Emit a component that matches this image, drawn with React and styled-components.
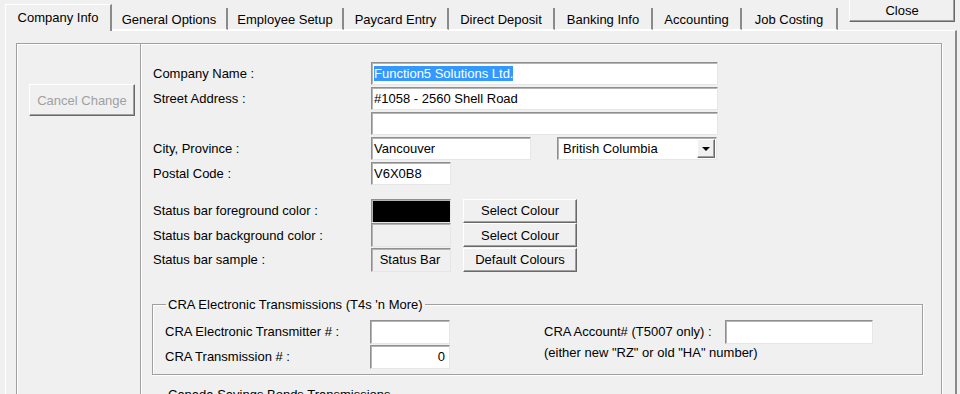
import React from 'react'
import styled, { createGlobalStyle } from 'styled-components'

const GlobalStyle = createGlobalStyle`
  body {
    margin: 0;
    background: #f0f0f0;
    font-family: "Liberation Sans", Arial, sans-serif;
    font-size: 13px;
    color: #000;
  }
`

const Screen = styled.div`
  width: 960px;
  height: 394px;
  overflow: hidden;
  background: #f0f0f0;
`

const TopBar = styled.div`
  display: flex;
  align-items: flex-start;
  height: 30px;
  padding-left: 5px;
`

const TabStrip = styled.div`
  display: flex;
  align-items: flex-end;
  height: 31px;
  position: relative;
  z-index: 1;
`

const Tab = styled.div`
  box-sizing: border-box;
  width: ${props => props.$w}px;
  display: flex;
  align-items: center;
  justify-content: center;
  white-space: nowrap;
  background: #f0f0f0;
  ${props => (props.$active
    ? `
    height: 27px;
    padding-bottom: 2px;
    border-top: 1px solid #fff;
    border-left: 1px solid #fff;
    border-right: 2px solid #8a8a8a;
  `
    : `
    height: 22px;
    margin-bottom: 1px;
    padding-top: 1px;
    border-right: 2px solid #8a8a8a;
    border-bottom: 1px solid #fff;
  `)}
`

const CloseButton = styled.div`
  box-sizing: border-box;
  margin-left: auto;
  margin-right: 5px;
  margin-top: -2px;
  width: 106px;
  height: 24px;
  padding-top: 1px;
  display: flex;
  align-items: center;
  justify-content: center;
  border: 1px solid;
  border-color: #fff #696969 #696969 #fff;
  box-shadow: inset -1px -1px 0 #a0a0a0;
`

const TabPage = styled.div`
  box-sizing: border-box;
  margin-left: 5px;
  width: 952px;
  height: 364px;
  border-top: 1px solid #fff;
  border-left: 1px solid #fff;
  border-right: 2px solid #8a8a8a;
  padding: 12px 13px 0 10px;
`

const Frame = styled.div`
  display: flex;
  height: 400px;
  border: 1px solid #a0a0a0;
  box-shadow: inset 1px 1px 0 #fff, 1px 1px 0 #fff;
`

const LeftColumn = styled.div`
  width: 124px;
  flex-shrink: 0;
  padding: 40px 0 0 12px;
  box-sizing: border-box;
  border-right: 1px solid #a0a0a0;
  box-shadow: 1px 0 0 #fff;
`

const Button = styled.div`
  box-sizing: border-box;
  width: ${props => props.$w}px;
  height: ${props => props.$h || 24}px;
  margin-left: ${props => props.$ml || 0}px;
  display: flex;
  align-items: center;
  justify-content: center;
  white-space: nowrap;
  color: ${props => (props.$disabled ? '#a0a0a0' : '#000')};
  background: #f0f0f0;
  border: 1px solid;
  border-color: #fff #696969 #696969 #fff;
  box-shadow: inset -1px -1px 0 #a0a0a0;
`

const FormArea = styled.div`
  flex: 1;
  padding: 17px 0 0 12px;
`

const Row = styled.div`
  display: flex;
  align-items: center;
  height: ${props => props.$h || 25}px;
`

const Label = styled.div`
  width: ${props => props.$w || 218}px;
  flex-shrink: 0;
  white-space: nowrap;
`

const Field = styled.div`
  box-sizing: border-box;
  width: ${props => props.$w}px;
  height: ${props => props.$h || 23}px;
  margin-left: ${props => props.$ml || 0}px;
  background: ${props => props.$bg || '#fff'};
  border: 1px solid;
  border-color: #8f8f8f #e6e6e6 #e6e6e6 #8f8f8f;
  box-shadow: inset 1px 1px 0 #b4b4b4;
  padding: 0 4px 1px 2px;
  display: flex;
  align-items: center;
  justify-content: ${props => (props.$align || 'flex-start')};
  white-space: nowrap;
  overflow: hidden;
`

const Selected = styled.span`
  background: #3399ff;
  color: #fff;
`

const SelectBox = styled(Field)`
  padding: 1px 1px 1px 5px;
  justify-content: space-between;
`

const ArrowButton = styled.div`
  box-sizing: border-box;
  width: 18px;
  height: 19px;
  display: flex;
  align-items: center;
  justify-content: center;
  border: 1px solid;
  border-color: #fff #696969 #696969 #fff;
  box-shadow: inset -1px -1px 0 #a0a0a0;
  background: #f0f0f0;
`

const Arrow = styled.div`
  width: 0;
  height: 0;
  border-left: 4px solid transparent;
  border-right: 4px solid transparent;
  border-top: 4px solid #000;
`

const ColourSection = styled.div`
  margin-top: 12px;
`

const Group = styled.fieldset`
  box-sizing: border-box;
  width: 771px;
  margin: ${props => props.$mt}px 0 0 -1px;
  padding: 7px 12px 5px 12px;
  border: 1px solid #a0a0a0;
  box-shadow: inset 1px 1px 0 #fff, 1px 1px 0 #fff;
`

const Legend = styled.legend`
  padding: 0 2px;
  margin-left: 1px;
  line-height: 15px;
`

const GroupGrid = styled.div`
  display: grid;
  grid-template-columns: 205px 80px 1fr;
  grid-auto-rows: 25px;
  align-items: center;
`

const AccountBlock = styled.div`
  grid-column: 3;
  grid-row: 1 / span 2;
  align-self: start;
  padding: 0 0 0 94px;
`

const Note = styled.div`
  line-height: 16px;
  margin-top: 1px;
`

const tabs = [
  { name: 'Company Info', w: 107, active: true },
  { name: 'General Options', w: 116 },
  { name: 'Employee Setup', w: 116 },
  { name: 'Paycard Entry', w: 105 },
  { name: 'Direct Deposit', w: 106 },
  { name: 'Banking Info', w: 98 },
  { name: 'Accounting', w: 89 },
  { name: 'Job Costing', w: 96 },
]

export default function App() {
  return (
    <Screen>
      <GlobalStyle />
      <TopBar>
        <TabStrip>
          {tabs.map(tab => (
            <Tab key={tab.name} $w={tab.w} $active={tab.active}>
              {tab.name}
            </Tab>
          ))}
        </TabStrip>
        <CloseButton>Close</CloseButton>
      </TopBar>
      <TabPage>
        <Frame>
          <LeftColumn>
            <Button $w={106} $h={32} $disabled>Cancel Change</Button>
          </LeftColumn>
          <FormArea>
            <Row>
              <Label>Company Name :</Label>
              <Field $w={347}><Selected>Function5 Solutions Ltd.</Selected></Field>
            </Row>
            <Row>
              <Label>Street Address :</Label>
              <Field $w={347}>#1058 - 2560 Shell Road</Field>
            </Row>
            <Row>
              <Label />
              <Field $w={347} />
            </Row>
            <Row>
              <Label>City, Province :</Label>
              <Field $w={160}>Vancouver</Field>
              <SelectBox $w={160} $ml={26}>
                British Columbia
                <ArrowButton><Arrow /></ArrowButton>
              </SelectBox>
            </Row>
            <Row>
              <Label>Postal Code :</Label>
              <Field $w={80}>V6X0B8</Field>
            </Row>

            <ColourSection>
              <Row $h={25}>
                <Label>Status bar foreground color :</Label>
                <Field $w={80} $h={24} $bg="#000" />
                <Button $w={114} $ml={12}>Select Colour</Button>
              </Row>
              <Row $h={24}>
                <Label>Status bar background color :</Label>
                <Field $w={80} $h={24} $bg="#f0f0f0" />
                <Button $w={114} $ml={12}>Select Colour</Button>
              </Row>
              <Row $h={25}>
                <Label>Status bar sample :</Label>
                <Field $w={80} $h={24} $bg="#f0f0f0" $align="center">Status Bar</Field>
                <Button $w={114} $ml={12}>Default Colours</Button>
              </Row>
            </ColourSection>

            <Group $mt={25}>
              <Legend>CRA Electronic Transmissions (T4s 'n More)</Legend>
              <GroupGrid>
                <Label $w={205}>CRA Electronic Transmitter # :</Label>
                <Field $w={80} $h={24} />
                <AccountBlock>
                  <Row $h={25}>
                    <Label $w={181}>CRA Account# (T5007 only) :</Label>
                    <Field $w={148} $h={24} />
                  </Row>
                  <Note>(either new "RZ" or old "HA" number)</Note>
                </AccountBlock>
                <Label $w={205}>CRA Transmission # :</Label>
                <Field $w={80} $h={24} $align="flex-end">0</Field>
              </GroupGrid>
            </Group>

            <Group $mt={12}>
              <Legend>Canada Savings Bonds Transmissions</Legend>
              <GroupGrid />
            </Group>
          </FormArea>
        </Frame>
      </TabPage>
    </Screen>
  )
}
